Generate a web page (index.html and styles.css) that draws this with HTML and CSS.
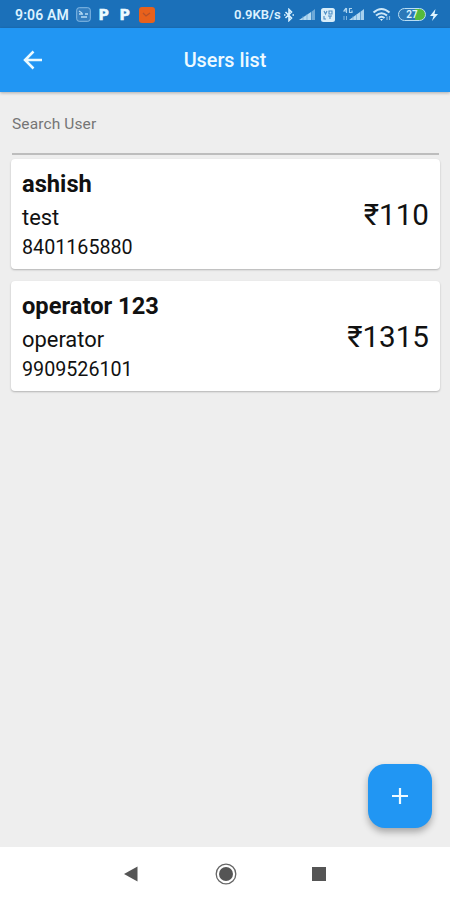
FILE: index.html
```html
<!DOCTYPE html>
<html lang="en">
<head>
<meta charset="utf-8">
<title>Users list</title>
<link rel="stylesheet" href="styles.css">
</head>
<body>
<div class="screen">
  <div class="status">
    <span class="time">9:06 AM</span>
    <svg class="note" width="15" height="15" viewBox="0 0 15 15"><rect x=".7" y=".7" width="13.6" height="13.6" rx="2.5" fill="#347fc1" stroke="#85b9e4"/><path d="M3 4l3 2M3 7h4M5 10h6M9 7h3" stroke="#b7dcf5" stroke-width="1.3"/></svg>
    <span class="pay">P</span>
    <span class="pay">P</span>
    <svg class="app" width="16" height="16" viewBox="0 0 16 16"><rect width="16" height="16" rx="3" fill="#e8611c"/><path d="M4 6l3 3 4-3" fill="none" stroke="#b5512a" stroke-width="1.3"/></svg>
    <div class="indicators">
      <span class="speed">0.9KB/s</span>
      <svg class="bt" width="10" height="14" viewBox="0 0 10 14"><path d="M1.5 4l6 6L5 12.500V1.500L7.500 4l-6 6M0 7h1.500M8.500 7H10" fill="none" stroke="#d9f1ff" stroke-width="1.600"/></svg>
      <svg class="signal" width="17" height="13" viewBox="0 0 17 13"><path d="M0 12L12 4v8z" fill="#b5daf2"/><path d="M12.500 12V3.700L16 1v11z" fill="#6ea9d8"/><path d="M4 8v4M8 6v6" stroke="#69a5d5" stroke-width=".7"/></svg>
      <svg class="volte" width="14" height="14" viewBox="0 0 14 14"><rect width="14" height="14" rx="2.500" fill="#d8edf9"/><path d="M3 3l1.500 3L6 3M8 3h3v3H8zM3 8v3h2M7 8h4M9 8v3" fill="none" stroke="#4b8cc3" stroke-width="1.100"/></svg>
      <svg class="mobile" width="24" height="15" viewBox="0 0 24 15"><path d="M5 1L3 4h3M5.500 1v5M11 1.500H8.500v4H11v-2" fill="none" stroke="#add5f0" stroke-width="1.200"/><path d="M3 9v4M5.500 13V9" stroke="#82b6df"/><path d="M8 13L19 5v8z" fill="#b5daf2"/><path d="M19.500 13V4.700L23 2v11z" fill="#a5d0ee"/><path d="M12 9v4M15.500 7v6" stroke="#69a5d5" stroke-width=".7"/></svg>
      <svg class="wifi" width="20" height="15" viewBox="0 0 20 15"><path d="M1.500 5.500Q9.500-1.500 17.500 5.500M4 8.500Q9.500 4 15 8.500M6.500 11Q9.500 8.500 12.500 11" fill="none" stroke="#cce7f8" stroke-width="2.100"/><path d="M8 12h3l-1.500 2z" fill="#e0f3fc"/><path d="M15 13V9.500M17.500 9v4" stroke="#84b7df" stroke-width="1.200"/></svg>
      <span class="battery">27</span>
      <svg class="bolt" width="8" height="12" viewBox="0 0 8 12"><path d="M5.500 0L0 7h3.500L2 12l6-7H4.500z" fill="#def4ff"/></svg>
    </div>
  </div>
  <header class="bar">
    <svg class="back" width="20" height="20" viewBox="0 0 20 20"><path d="M19 10H2M10.500 1.500L2 10l8.500 8.500" fill="none" stroke="#eafaff" stroke-width="2.500"/></svg>
    <h1>Users list</h1>
  </header>
  <main>
    <div class="search">Search User</div>
    <section class="card">
      <div><h2>ashish</h2><p class="role">test</p><p class="phone">8401165880</p></div>
      <span class="amount">₹110</span>
    </section>
    <section class="card">
      <div><h2>operator 123</h2><p class="role">operator</p><p class="phone">9909526101</p></div>
      <span class="amount">₹1315</span>
    </section>
    <div class="fab"><svg width="18" height="18" viewBox="0 0 18 18"><path d="M9 1v16M1 9h16" stroke="#eefaff" stroke-width="2.200"/></svg></div>
  </main>
  <nav>
    <svg class="nav-back" width="14" height="16" viewBox="0 0 14 16"><path d="M0 8L13.500 .5v15z" fill="#555"/></svg>
    <svg class="nav-home" width="22" height="22" viewBox="0 0 22 22"><circle cx="11" cy="11" r="9.800" fill="none" stroke="#666" stroke-width="1.300"/><circle cx="11" cy="11" r="7" fill="#555"/></svg>
    <svg class="nav-recent" width="14" height="14" viewBox="0 0 14 14"><path d="M0 0h14v14H0z" fill="#555"/></svg>
  </nav>
</div>
</body>
</html>
```
FILE: styles.css
```css
* { box-sizing: border-box; }
body { margin: 0; font-family: Roboto, "Liberation Sans", sans-serif; }
h1, h2, p { margin: 0; }
svg { display: block; flex: none; }
.screen { width: 450px; height: 900px; display: flex; flex-direction: column; background: #eee; overflow: hidden; }
.status { height: 28px; flex: none; display: flex; align-items: center; padding: 1px 12px 0 15px; background: #1b70b9; color: #dcf2ff; font-size: 14px; font-weight: 600; white-space: nowrap; }
.time { width: 61px; letter-spacing: .15px; }
.pay { width: 12px; margin-left: 8px; font-size: 15px; font-weight: 900; color: #eefaff; -webkit-text-stroke: .6px #eefaff; }
.pay + .pay { margin-left: 9px; }
.app { margin-left: 7px; }
.indicators { display: flex; align-items: center; margin-left: auto; }
.speed { width: 50px; font-size: 13px; }
.signal { margin-left: 5px; }
.volte { margin-left: 5px; }
.mobile { margin-left: 6px; }
.wifi { margin-left: 7px; }
.battery { width: 28px; height: 13px; margin-left: 6px; border: 1.5px solid #b9def4; border-radius: 7px; background: linear-gradient(90deg, #2b78b8 62%, #55ba3c 62%); font-size: 10px; line-height: 11px; text-align: center; }
.bolt { margin-left: 4px; }
.bar { height: 64px; flex: none; display: grid; grid-template-columns: 1fr auto 1fr; align-items: center; background: #2196f3; box-shadow: 0 1px 3px rgba(0,0,0,.28); z-index: 1; }
.back { margin-left: 23px; }
h1 { color: #eefaff; font-size: 19.8px; line-height: 24px; font-weight: 500; padding-top: 2px; }
main { flex: 1; position: relative; padding: 0 10px 0 11px; }
.search { height: 63px; margin: 0 1px 4px; padding-top: 21px; border-bottom: 2px solid #bdbdbd; color: #757575; font-size: 15.5px; letter-spacing: .12px; line-height: 22px; }
.card { height: 110px; margin-bottom: 12px; padding: 10px 11px; display: flex; justify-content: space-between; background: #fff; border-radius: 4px; box-shadow: 0 1px 2px rgba(0,0,0,.25); color: #111; }
h2 { font-size: 23.7px; line-height: 31px; font-weight: 700; }
.role { padding-top: 2px; font-size: 21.9px; line-height: 32px; }
.phone { font-size: 19.7px; line-height: 27px; }
.amount { align-self: center; padding-top: 2px; font-size: 29.6px; line-height: 36px; }
.fab { position: absolute; right: 18px; bottom: 19px; width: 64px; height: 64px; border-radius: 17px; background: #2196f3; display: grid; place-items: center; box-shadow: 0 4px 7px rgba(0,0,0,.3); }
nav { height: 53px; flex: none; display: flex; align-items: center; background: #fff; padding-left: 124px; }
.nav-home { margin-left: 77px; }
.nav-recent { margin-left: 75px; }
```
